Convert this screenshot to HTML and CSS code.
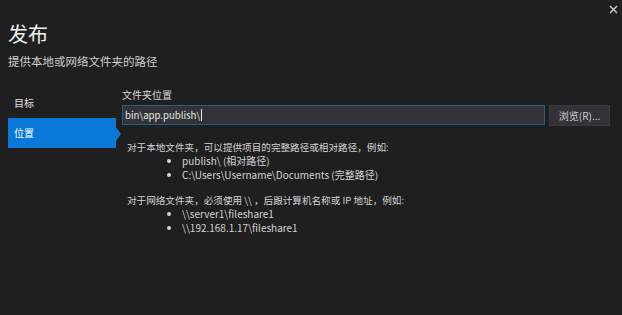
FILE: index.html
```html
<!DOCTYPE html>
<html lang="zh">
<head>
<meta charset="utf-8">
<link rel="stylesheet" href="styles.css">
</head>
<body>
<div class="dialog">
  <div class="close">
    <svg width="9" height="9" viewBox="0 0 9 9"><path d="M1 1L8 8M8 1L1 8" stroke="#d0d0d0" stroke-width="1.4"/></svg>
  </div>
  <header class="head">
    <h1 class="title">发布</h1>
    <p class="subtitle">提供本地或网络文件夹的路径</p>
  </header>
  <div class="main">
    <nav class="nav">
      <div class="nav-item first">目标</div>
      <div class="nav-item active">位置</div>
    </nav>
    <section class="content">
      <label class="field-label">文件夹位置</label>
      <div class="row">
        <div class="input">bin\app.publish\<span class="caret"></span></div>
        <button class="btn">浏览(R)...</button>
      </div>
      <p class="para">对于本地文件夹，可以提供项目的完整路径或相对路径，例如:</p>
      <ul class="list">
        <li>publish\ (相对路径)</li>
        <li>C:\Users\Username\Documents (完整路径)</li>
      </ul>
      <p class="para second">对于网络文件夹，必须使用 \\ ，后跟计算机名称或 IP 地址，例如:</p>
      <ul class="list">
        <li>\\server1\fileshare1</li>
        <li>\\192.168.1.17\fileshare1</li>
      </ul>
    </section>
  </div>
</div>
</body>
</html>
```
FILE: styles.css
```css
html, body {
  margin: 0;
  padding: 0;
  background: #1f1f1f;
}
body {
  width: 622px;
  height: 315px;
  overflow: hidden;
  font-family: "Noto Sans CJK SC", "Segoe UI", "Noto Sans", sans-serif;
  color: #d6d6d6;
}
.dialog {
  position: relative;
  width: 622px;
  height: 315px;
}
.close {
  position: absolute;
  left: 609px;
  top: 5px;
  width: 9px;
  height: 9px;
  display: flex;
}
.head {
  padding: 20px 0 0 8px;
}
.title {
  margin: 0;
  font-size: 20px;
  font-weight: 400;
  line-height: 28px;
  color: #f0f0f0;
}
.subtitle {
  margin: 5px 0 0;
  font-size: 11.5px;
  line-height: 16px;
  color: #d0d0d0;
}
.main {
  display: flex;
}
.nav {
  width: 114px;
  padding-top: 24px;
  margin-left: 8px;
}
.nav-item {
  padding-left: 6px;
  font-size: 10px;
  color: #e0e0e0;
  box-sizing: border-box;
}
.nav-item.first {
  height: 25px;
  line-height: 20px;
}
.nav-item.active {
  position: relative;
  width: 108px;
  height: 30px;
  line-height: 30px;
  background: #0a78d7;
  color: #ffffff;
}
.nav-item.active::after {
  content: "";
  position: absolute;
  right: -5px;
  top: 9px;
  border-top: 7px solid transparent;
  border-bottom: 7px solid transparent;
  border-left: 5px solid #0a78d7;
}
.content {
  flex: 1;
  padding-top: 20px;
}
.field-label {
  display: block;
  font-size: 10px;
  line-height: 12px;
  color: #d8d8d8;
}
.row {
  display: flex;
  gap: 4px;
  margin-top: 4px;
}
.input {
  width: 423px;
  height: 20px;
  box-sizing: border-box;
  border: 1px solid #1e5f92;
  background: #333337;
  font-size: 9.6px;
  line-height: 18px;
  padding-left: 2px;
  color: #e6e6e6;
  display: flex;
  align-items: center;
}
.caret {
  display: inline-block;
  width: 1px;
  height: 12px;
  background: #e6e6e6;
  margin-left: 1px;
}
.btn {
  width: 61px;
  height: 21px;
  margin: 0;
  padding: 0;
  border: 1px solid #3a3a3d;
  background: #333337;
  color: #cfcfcf;
  font-family: inherit;
  font-size: 10px;
  line-height: 19px;
}
.para {
  margin: 14px 0 0 5px;
  font-size: 9.6px;
  line-height: 14px;
  color: #d4d4d4;
}
.para.second {
  margin-top: 11px;
}
.list {
  margin: 0;
  padding-left: 60px;
  font-size: 10px;
  line-height: 14px;
  color: #d4d4d4;
}
```
